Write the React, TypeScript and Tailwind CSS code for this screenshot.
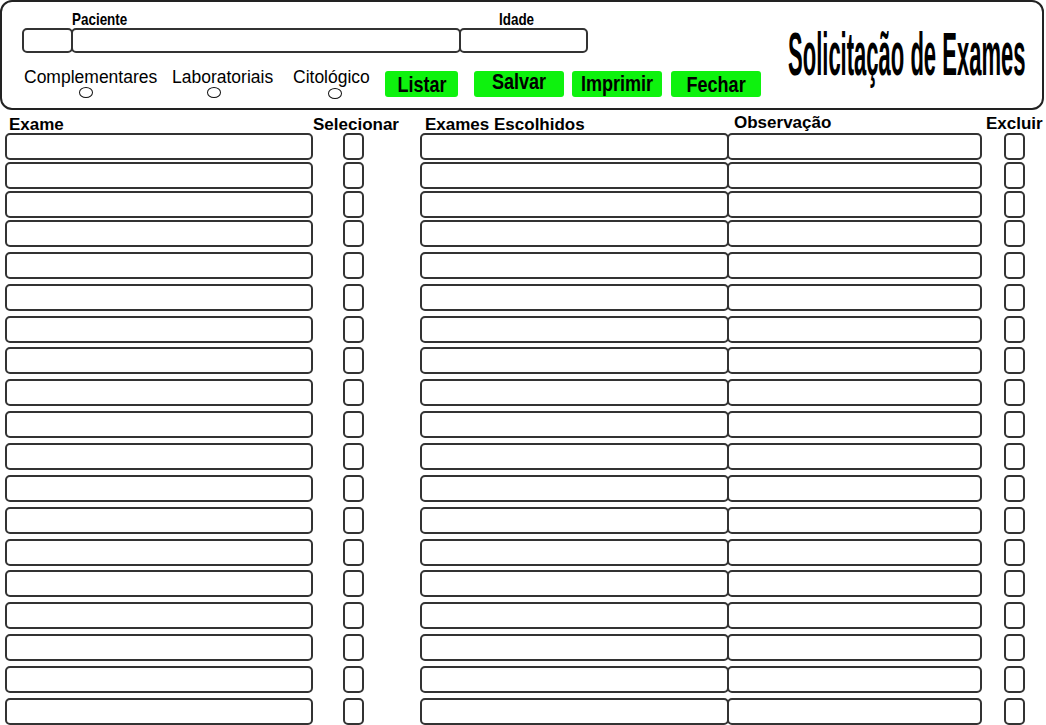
import React from "react";

const ROWS = 19;

function Box({ className = "" }: { className?: string }) {
  return <div className={`h-full border-2 border-[#333] rounded-[5px] bg-white ${className}`} />;
}

function GreenButton({ label, className = "", textClass = "" }: { label: string; className?: string; textClass?: string }) {
  return (
    <div className={`mt-[5px] h-[26px] rounded-[3px] bg-[#0ef20e] flex items-start justify-center overflow-visible ${className}`}>
      <span className={`font-bold text-[22px] leading-[22px] whitespace-nowrap scale-x-[0.82] ${textClass}`}>{label}</span>
    </div>
  );
}

export default function App() {
  const sans = { fontFamily: '"Liberation Sans", Arial, sans-serif' };
  return (
    <div className="w-[1046px] h-[725px] bg-white overflow-hidden text-black" style={sans}>
      {/* Header panel */}
      <div className="w-[1044px] h-[110px] border-2 border-[#222] rounded-[12px] flex">
        <div className="flex flex-col pl-[20px]">
          {/* labels */}
          <div className="mt-[9px] h-[17px] flex font-bold text-[17px] leading-[17px] whitespace-nowrap">
            <span className="ml-[50px] w-[388px]">
              <span className="inline-block origin-left scale-x-[0.79]">Paciente</span>
            </span>
            <span className="ml-[39px]">
              <span className="inline-block origin-left scale-x-[0.79]">Idade</span>
            </span>
          </div>
          {/* inputs */}
          <div className="h-[25px] flex">
            <Box className="w-[51px]" />
            <Box className="w-[390px] -ml-[2px]" />
            <Box className="w-[129px] -ml-[2px]" />
          </div>
          {/* radios + buttons */}
          <div className="mt-[13px] flex items-start">
            <div className="ml-[2px] w-[148px] flex flex-col">
              <span className="mt-[1px] text-[17.5px] leading-[20px] whitespace-nowrap">Complementares</span>
              <span className="ml-[55px] w-[14px] h-[11px] border-[1.5px] border-[#111] rounded-[50%]" />
            </div>
            <div className="w-[121px] flex flex-col">
              <span className="mt-[1px] text-[17.5px] leading-[20px] whitespace-nowrap">Laboratoriais</span>
              <span className="ml-[35px] w-[14px] h-[11px] border-[1.5px] border-[#111] rounded-[50%]" />
            </div>
            <div className="w-[92px] flex flex-col">
              <span className="mt-[1px] text-[17.5px] leading-[20px] whitespace-nowrap">Citológico</span>
              <span className="ml-[35px] mt-[1px] w-[14px] h-[11px] border-[1.5px] border-[#111] rounded-[50%]" />
            </div>
            <GreenButton label="Listar" className="w-[73px]" textClass="mt-[3px]" />
            <GreenButton label="Salvar" className="ml-[16px] w-[90px]" textClass="" />
            <GreenButton label="Imprimir" className="ml-[8px] w-[90px]" textClass="mt-[2px]" />
            <GreenButton label="Fechar" className="ml-[9px] w-[90px]" textClass="mt-[3px]" />
          </div>
        </div>
        <div className="ml-auto mr-[15px] mt-[22px] w-[239px] whitespace-nowrap">
          <div className="inline-block font-bold text-[61px] leading-[61px] origin-left scale-x-[0.361]">
            Solicitação de Exames
          </div>
        </div>
      </div>

      {/* Table headings */}
      <div className="mt-[6px] h-[17px] flex items-start font-bold text-[17px] leading-[18px] whitespace-nowrap">
        <span className="ml-[9px] w-[304px]">Exame</span>
        <span className="w-[112px]">Selecionar</span>
        <span className="w-[309px]">Exames Escolhidos</span>
        <span className="w-[252px] -mt-[2px]">Observação</span>
        <span className="-mt-[1px]">Excluir</span>
      </div>

      {/* Rows */}
      <div className="flex flex-col">
        {Array.from({ length: ROWS }).map((_, i) => (
          <div key={i} className={`h-[27px] flex ${i === 0 ? "" : i < 4 ? "mt-[2px]" : "mt-[4.86px]"}`}>
            <Box className="ml-[5px] w-[308px]" />
            <Box className="ml-[30px] w-[21px]" />
            <Box className="ml-[56px] w-[309px]" />
            <Box className="-ml-[2px] w-[255px]" />
            <Box className="ml-[22px] w-[21px]" />
          </div>
        ))}
      </div>
    </div>
  );
}
